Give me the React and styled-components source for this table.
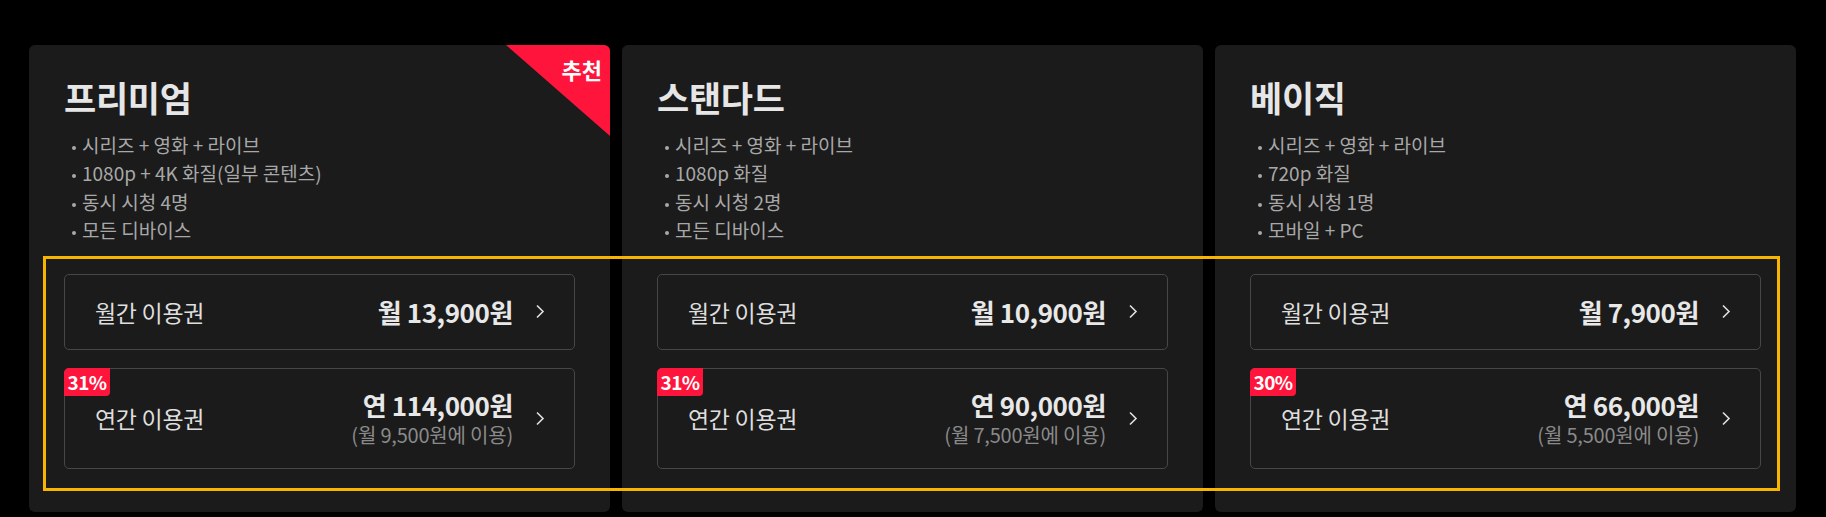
import React from "react";
import styled, { createGlobalStyle } from "styled-components";

const plans = [
  {
    name: "프리미엄",
    recommended: true,
    features: ["시리즈 + 영화 + 라이브", "1080p + 4K 화질(일부 콘텐츠)", "동시 시청 4명", "모든 디바이스"],
    monthly: "월 13,900원",
    yearly: "연 114,000원",
    yearlyPer: "(월 9,500원에 이용)",
    discount: "31%",
  },
  {
    name: "스탠다드",
    features: ["시리즈 + 영화 + 라이브", "1080p 화질", "동시 시청 2명", "모든 디바이스"],
    monthly: "월 10,900원",
    yearly: "연 90,000원",
    yearlyPer: "(월 7,500원에 이용)",
    discount: "31%",
  },
  {
    name: "베이직",
    features: ["시리즈 + 영화 + 라이브", "720p 화질", "동시 시청 1명", "모바일 + PC"],
    monthly: "월 7,900원",
    yearly: "연 66,000원",
    yearlyPer: "(월 5,500원에 이용)",
    discount: "30%",
  },
];

const Chevron = () => (
  <ChevronIcon width="10" height="15" viewBox="0 0 10 15">
    <polyline points="2,1.5 8,7.5 2,13.5" fill="none" stroke="currentColor" strokeWidth="1.6" />
  </ChevronIcon>
);

const App = () => {
  return (
    <>
      <GlobalStyle />
      <Page>
        {plans.map((plan) => (
          <Card key={plan.name}>
            {plan.recommended && <Ribbon>추천</Ribbon>}
            <Title>{plan.name}</Title>
            <Features>
              {plan.features.map((f) => (
                <Feature key={f}>{f}</Feature>
              ))}
            </Features>
            <Options>
              <OptionBox>
                <Label>월간 이용권</Label>
                <PriceWrap>
                  <PriceCol>
                    <Price>{plan.monthly}</Price>
                  </PriceCol>
                  <Chevron />
                </PriceWrap>
              </OptionBox>
              <OptionBox $tall>
                <Badge>{plan.discount}</Badge>
                <Label>연간 이용권</Label>
                <PriceWrap>
                  <PriceCol>
                    <Price>{plan.yearly}</Price>
                    <Sub>{plan.yearlyPer}</Sub>
                  </PriceCol>
                  <Chevron />
                </PriceWrap>
              </OptionBox>
            </Options>
          </Card>
        ))}
        <Highlight />
      </Page>
    </>
  );
};

export default App;

const GlobalStyle = createGlobalStyle`
  body {
    margin: 0;
    background: #000;
    font-family: "Noto Sans CJK KR", "Noto Sans", sans-serif;
  }
`;

const Page = styled.div`
  position: relative;
  display: grid;
  grid-template-columns: repeat(3, 1fr);
  gap: 12px;
  padding: 45px 30px 5px 29px;
  height: 517px;
  box-sizing: border-box;
`;

const Card = styled.div`
  position: relative;
  overflow: hidden;
  display: flex;
  flex-direction: column;
  background: #1b1b1b;
  border-radius: 6px;
  padding: 31px 35px 43px;
`;

const Ribbon = styled.div`
  position: absolute;
  top: 0;
  right: 0;
  width: 104px;
  height: 91px;
  background: #ff153c;
  clip-path: polygon(0 0, 100% 0, 100% 100%);
  display: flex;
  justify-content: flex-end;
  box-sizing: border-box;
  padding: 13px 8px 0 0;
  color: #fff;
  font-size: 22px;
  font-weight: 700;
  line-height: 1;
`;

const Title = styled.h2`
  margin: 0 0 13px;
  font-size: 35px;
  font-weight: 700;
  line-height: 42px;
  color: #e6e6e6;
  letter-spacing: -0.3px;
`;

const Features = styled.ul`
  list-style: none;
  margin: 0;
  padding: 0 0 0 18px;
`;

const Feature = styled.li`
  position: relative;
  font-size: 19px;
  line-height: 28.4px;
  height: 28.4px;
  color: #a8a8a8;

  &::before {
    content: "";
    position: absolute;
    left: -10px;
    top: 15px;
    width: 4px;
    height: 4px;
    border-radius: 50%;
    background: #a8a8a8;
  }
`;

const Options = styled.div`
  display: flex;
  flex-direction: column;
  gap: 18px;
  margin-top: 29px;
`;

const OptionBox = styled.div`
  position: relative;
  display: flex;
  align-items: center;
  justify-content: space-between;
  height: ${(p) => (p.$tall ? "101px" : "76px")};
  box-sizing: border-box;
  border: 1px solid #474747;
  border-radius: 5px;
  padding: 0 29px 0 30px;
`;

const Badge = styled.span`
  position: absolute;
  top: -1px;
  left: -1px;
  width: 46px;
  height: 28px;
  display: flex;
  align-items: center;
  justify-content: center;
  background: #ff153c;
  color: #fff;
  font-size: 19px;
  font-weight: 700;
  letter-spacing: -0.6px;
  border-radius: 5px 0 4px 0;
`;

const Label = styled.span`
  font-size: 23px;
  color: #dedede;
  letter-spacing: -0.3px;
`;

const PriceWrap = styled.div`
  display: flex;
  align-items: center;
  gap: 22px;
`;

const PriceCol = styled.div`
  display: flex;
  flex-direction: column;
  align-items: flex-end;
`;

const Price = styled.span`
  font-size: 26px;
  font-weight: 700;
  line-height: 34px;
  color: #e8e8e8;
  letter-spacing: -0.4px;
`;

const Sub = styled.span`
  font-size: 20px;
  line-height: 26px;
  color: #8a8a8a;
  letter-spacing: -0.2px;
`;

const ChevronIcon = styled.svg`
  color: #e0e0e0;
  flex-shrink: 0;
`;

const Highlight = styled.div`
  position: absolute;
  left: 43px;
  top: 256px;
  width: 1737px;
  height: 235px;
  box-sizing: border-box;
  border: 3px solid #f7b500;
  pointer-events: none;
`;
